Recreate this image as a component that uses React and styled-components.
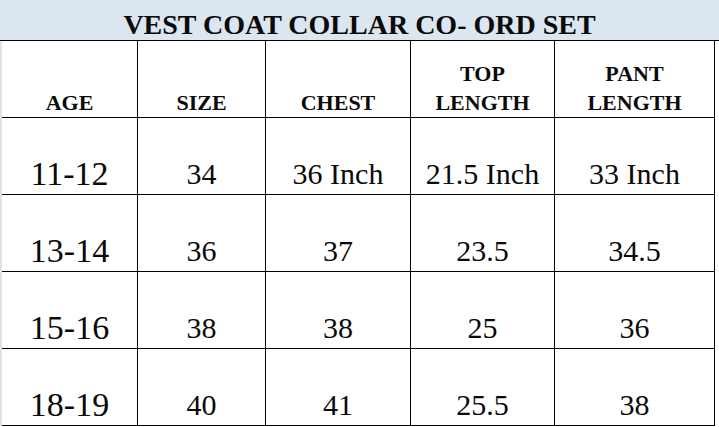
import React from "react"
import styled, { createGlobalStyle } from "styled-components"

const FONT = `"Liberation Serif", "DejaVu Serif", serif`

const GlobalStyle = createGlobalStyle`
	html, body {
		margin: 0;
		padding: 0;
		background: #ffffff;
	}
	body {
		font-family: ${FONT};
		color: #000000;
	}
`

const Sheet = styled.div`
	width: 719px;
	height: 427px;
	overflow: hidden;
	background: #ffffff;
	font-family: ${FONT};
`

const TitleBar = styled.div`
	height: 40px;
	background: #dce6f1;
	border-bottom: 1px solid #000000;
	display: flex;
	align-items: flex-end;
	justify-content: center;
	font-family: ${FONT};
	font-size: 28px;
	font-weight: bold;
	line-height: 31px;
	color: #0a0a0a;
`

const Grid = styled.div`
	display: grid;
	grid-template-columns: 136px 128px 145px 144px 160px;
	grid-auto-rows: 77px;
	width: 715px;
	border-left: 2px solid #dfe3e8;
`

const Cell = styled.div`
	display: flex;
	flex-direction: column;
	align-items: center;
	justify-content: flex-end;
	text-align: center;
	border-right: 1px solid #000000;
	border-bottom: 1px solid #000000;
	padding-bottom: ${(props) => (props.head ? "0" : props.big ? "1px" : "3px")};
	font-family: ${FONT};
	font-size: ${(props) => (props.head ? "22px" : props.big ? "34px" : "30px")};
	font-weight: ${(props) => (props.head ? "bold" : "normal")};
	line-height: ${(props) => (props.head ? "29px" : "normal")};
	color: #0a0a0a;
	white-space: nowrap;
`

const headers = [["AGE"], ["SIZE"], ["CHEST"], ["TOP", "LENGTH"], ["PANT", "LENGTH"]]

const rows = [
	["11-12", "34", "36 Inch", "21.5 Inch", "33 Inch"],
	["13-14", "36", "37", "23.5", "34.5"],
	["15-16", "38", "38", "25", "36"],
	["18-19", "40", "41", "25.5", "38"],
]

export default function App() {
	return (
		<>
			<GlobalStyle />
			<Sheet>
				<TitleBar>VEST COAT COLLAR CO- ORD SET</TitleBar>
				<Grid>
					{headers.map((lines, i) => (
						<Cell head key={"h" + i}>
							{lines.map((l) => (
								<span key={l}>{l}</span>
							))}
						</Cell>
					))}
					{rows.map((row, r) =>
						row.map((value, c) => (
							<Cell big={c === 0} key={r + "-" + c}>
								{value}
							</Cell>
						))
					)}
				</Grid>
			</Sheet>
		</>
	)
}
